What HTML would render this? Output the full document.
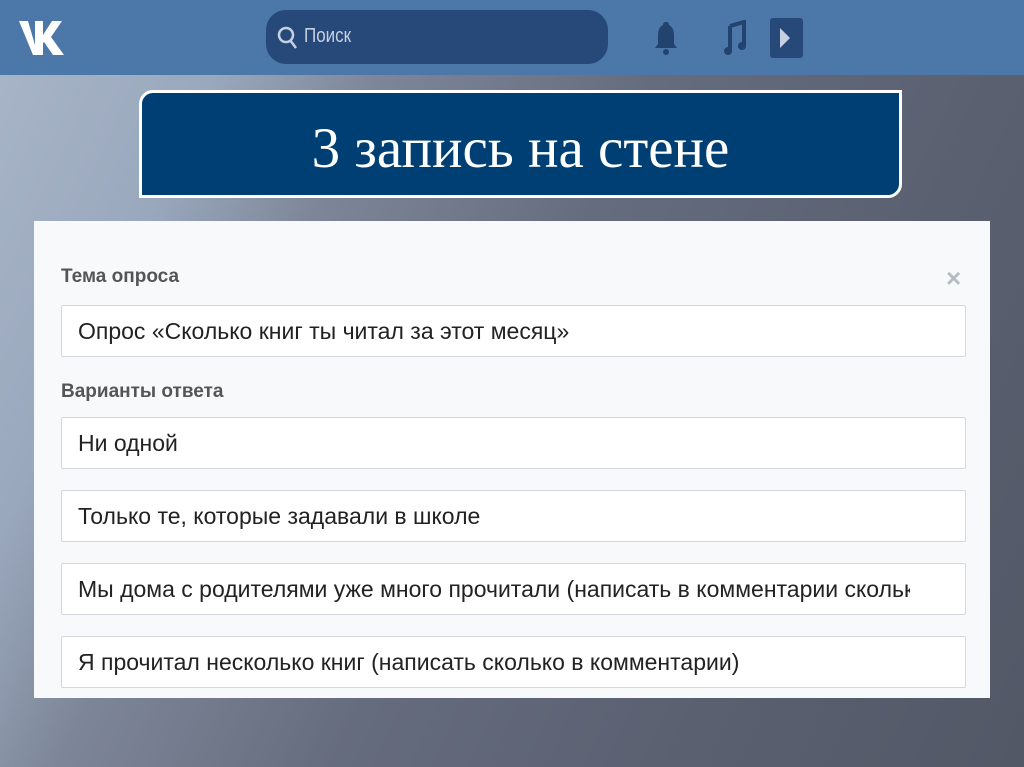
<!DOCTYPE html>
<html><head><meta charset="utf-8"><style>
*{margin:0;padding:0;box-sizing:border-box}
body{width:1024px;height:767px;overflow:hidden;position:relative;font-family:"Liberation Sans","DejaVu Sans",sans-serif;
background:linear-gradient(115deg,#a9b6c9 0%,#9aa8bd 18%,#7d8698 30%,#656c7e 50%,#5a6070 75%,#525866 100%);}
.hdr{position:absolute;left:0;top:0;width:1024px;height:75px;background:#4c77a9}
.search{position:absolute;left:266px;top:10px;width:342px;height:54px;border-radius:20px;background:#26497a}
.search span{position:absolute;left:38px;top:15px;color:#c5d1e0;font-size:20px;transform:scaleX(.85);transform-origin:left}
.title{position:absolute;left:139px;top:90px;width:763px;height:108px;background:#003f74;border:3px solid #fff;border-radius:14px 0 14px 0;color:#fff;font-family:"Liberation Serif",serif;font-size:57px;text-align:center;line-height:112px;padding-left:0}
.panel{position:absolute;left:34px;top:221px;width:956px;height:477px;background:#f8f9fb}
.lbl{position:absolute;left:27px;font-weight:bold;color:#555;font-size:19px}
.inp{position:absolute;left:27px;width:905px;height:52px;background:#fff;border:1px solid #d3d8de;border-radius:2px;font-size:23px;color:#222;padding:12px 16px;white-space:nowrap;overflow:hidden}
.x{position:absolute;left:912px;top:42px;color:#b4bcc6;font-size:26px;font-weight:bold}
</style></head><body>
<div class="hdr">
<svg style="position:absolute;left:18px;top:20px" width="48" height="36" viewBox="0 0 48 36"><path d="M1 1h9l7 24V1h8v14l9-14h10L33 17l13 18H35l-9-13-1 1v12H15z" fill="#fff"/></svg>
<div class="search"><svg style="position:absolute;left:10px;top:16px" width="22" height="24" viewBox="0 0 22 24"><circle cx="10" cy="9" r="7" fill="none" stroke="#c5d1e0" stroke-width="2.5"/><path d="M14 14l6 8" stroke="#c5d1e0" stroke-width="2.5"/></svg><span>Поиск</span></div>
<svg style="position:absolute;left:653px;top:20px" width="26" height="36" viewBox="0 0 26 36"><path d="M13 2c-2 0-3 1-3 3-4 2-5 6-5 11v8l-3 4h22l-3-4v-8c0-5-1-9-5-11 0-2-1-3-3-3z" fill="#23436f"/><circle cx="13" cy="32" r="3" fill="#23436f"/></svg>
<svg style="position:absolute;left:722px;top:20px" width="26" height="36" viewBox="0 0 26 36"><path d="M8 6l14-4v24" stroke="#23436f" stroke-width="4" fill="none"/><path d="M8 6v26" stroke="#23436f" stroke-width="4"/><circle cx="6" cy="31" r="4" fill="#23436f"/><circle cx="20" cy="26" r="4" fill="#23436f"/></svg>
<div style="position:absolute;left:770px;top:18px;width:33px;height:40px;background:#26497a;border-radius:3px"></div>
<svg style="position:absolute;left:780px;top:28px" width="12" height="20"><path d="M0 0l10 10-10 10z" fill="#c5d1e0"/></svg>
</div>
<div class="title">3 запись на стене</div>
<div class="panel">
<div class="lbl" style="top:45px">Тема опроса</div>
<div class="x">×</div>
<div class="inp" style="top:84px">Опрос «Сколько книг ты читал за этот месяц»</div>
<div class="lbl" style="top:160px">Варианты ответа</div>
<div class="inp" style="top:196px">Ни одной</div>
<div class="inp" style="top:269px">Только те, которые задавали в школе</div>
<div class="inp" style="top:342px"><span style="display:block;width:832px;overflow:hidden">Мы дома с родителями уже много прочитали (написать в комментарии сколько)</span></div>
<div class="inp" style="top:415px">Я прочитал несколько книг (написать сколько в комментарии)</div>
</div>
</body></html>
